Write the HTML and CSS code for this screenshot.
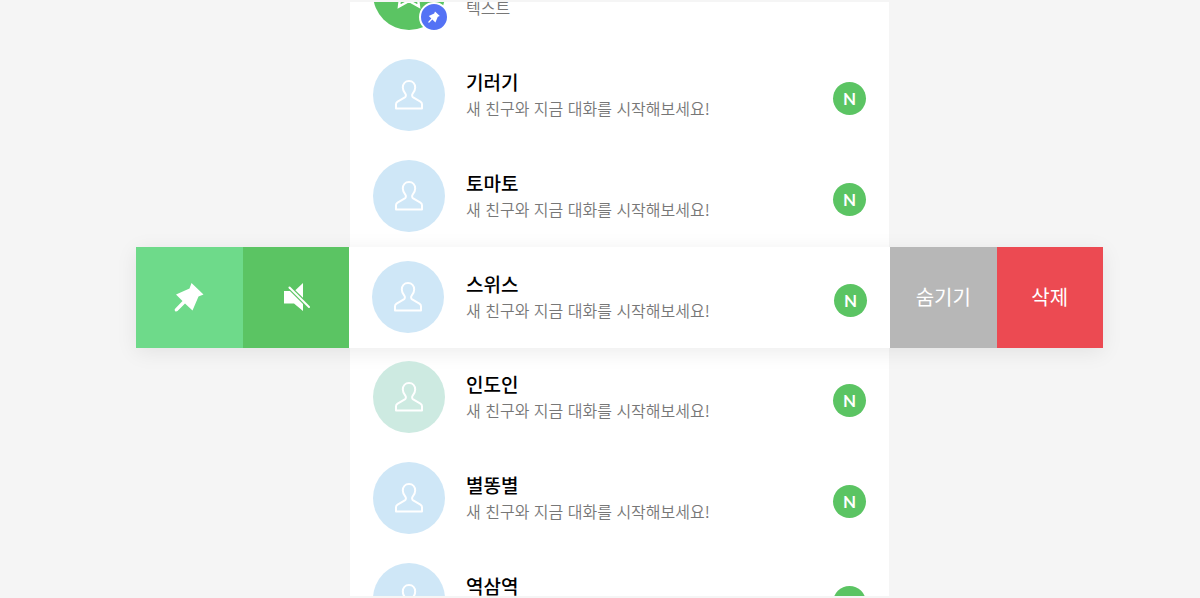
FILE: index.html
```
<!DOCTYPE html>
<html lang="ko">
<head>
<meta charset="utf-8">
<meta name="viewport" content="width=device-width, initial-scale=1">
<title>채팅</title>
<link rel="stylesheet" href="styles.css">
</head>
<body>

<!-- Shared icons -->
<svg class="sprite" aria-hidden="true">
  <symbol id="person" viewBox="0 0 28 30">
    <path d="M14 1C10.200 1 7.800 3.800 7.800 7.600C7.800 10 8.900 12 10.300 13.600C11.200 14.700 11.100 16.500 9.800 17.400L2.600 21.600C1.500 22.300 1 23 1 24.200V28.500H27V24.200C27 23 26.500 22.300 25.400 21.600L18.200 17.400C16.900 16.500 16.800 14.700 17.700 13.600C19.100 12 20.200 10 20.200 7.600C20.200 3.800 17.800 1 14 1Z" fill="none" stroke="#fff" stroke-width="2" stroke-linejoin="round"/>
  </symbol>
  <symbol id="pin" viewBox="0 0 30 30">
    <path d="M17.500 1L29.500 12.500L24.500 14.500L18.500 28.500L11 21.500L3.500 29Q2 30 1 28.900T1.300 26.500L8.500 19L2 12.500L15.500 6.500Z" fill="#fff"/>
  </symbol>
</svg>

<div class="page">
  <ul class="list">
    <li class="row">
      <div class="avatar star">
        <svg width="36" height="36" viewBox="0 0 36 36"><path d="M18 0L22.500 9.500L33 11L26.500 18.500L28 30.500L18 25L8 30.500L9.500 18.500L3 11L13.500 9.500Z" fill="none" stroke="#fff" stroke-width="2.400"/></svg>
        <span class="pinned"><svg width="12" height="12"><use href="#pin"/></svg></span>
      </div>
      <div class="text">
        <h2>텍스트</h2>
        <p>텍스트</p>
      </div>
    </li>
    <li class="row">
      <div class="avatar"><svg width="28" height="30"><use href="#person"/></svg></div>
      <div class="text">
        <h2>기러기</h2>
        <p>새 친구와 지금 대화를 시작해보세요!</p>
      </div>
      <span class="new">N</span>
    </li>
    <li class="row">
      <div class="avatar"><svg width="28" height="30"><use href="#person"/></svg></div>
      <div class="text">
        <h2>토마토</h2>
        <p>새 친구와 지금 대화를 시작해보세요!</p>
      </div>
      <span class="new">N</span>
    </li>
    <!-- Swiped row, with the actions of both sides open -->
    <li class="swipe">
      <div class="actions">
        <button class="pin" type="button" aria-label="고정"><svg width="30" height="30"><use href="#pin"/></svg></button>
        <button class="mute" type="button" aria-label="알림 끄기">
          <svg width="28" height="30" viewBox="0 0 28 30">
            <path d="M2 9H10.500L21 19.500V29L12 21.500H2Z" fill="#fff"/>
            <path d="M21 1V17.500L12.500 9Z" fill="#fff"/>
            <path d="M7.500 5.500L27 25" stroke="#5bc463" stroke-width="4.500"/>
            <path d="M7.500 5.500L27 25" stroke="#fff" stroke-width="2" stroke-linecap="round"/>
          </svg>
        </button>
      </div>
      <div class="row">
        <div class="avatar"><svg width="28" height="30"><use href="#person"/></svg></div>
        <div class="text">
          <h2>스위스</h2>
          <p>새 친구와 지금 대화를 시작해보세요!</p>
        </div>
        <span class="new">N</span>
      </div>
      <div class="actions">
        <button class="hide" type="button">숨기기</button>
        <button class="delete" type="button">삭제</button>
      </div>
    </li>
    <li class="row">
      <div class="avatar green"><svg width="28" height="30"><use href="#person"/></svg></div>
      <div class="text">
        <h2>인도인</h2>
        <p>새 친구와 지금 대화를 시작해보세요!</p>
      </div>
      <span class="new">N</span>
    </li>
    <li class="row">
      <div class="avatar"><svg width="28" height="30"><use href="#person"/></svg></div>
      <div class="text">
        <h2>별똥별</h2>
        <p>새 친구와 지금 대화를 시작해보세요!</p>
      </div>
      <span class="new">N</span>
    </li>
    <li class="row">
      <div class="avatar"><svg width="28" height="30"><use href="#person"/></svg></div>
      <div class="text">
        <h2>역삼역</h2>
        <p>새 친구와 지금 대화를 시작해보세요!</p>
      </div>
      <span class="new">N</span>
    </li>
  </ul>
</div>

</body>
</html>
```

FILE: styles.css
```
* {
  box-sizing: border-box;
}

body {
  margin: 0;
  padding: 2px 0;
  background: #f5f5f5;
  font-family: "Noto Sans CJK KR", "Noto Sans", sans-serif;
}

.sprite {
  display: block;
  width: 0;
  height: 0;
}

svg {
  display: block;
}

/* Visible part of the scrolled list */
.page {
  display: flex;
  justify-content: center;
  height: calc(100vh - 4px);
  padding-left: 39px;
  overflow: hidden;
}

/* Chat list */
.list {
  display: flex;
  flex: 1;
  flex-direction: column;
  max-width: 539px;
  margin: 0;
  padding: 0;
  list-style: none;
  background: white;
}

.row {
  display: flex;
  flex: none;
  align-items: center;
  gap: 21px;
  height: 101px;
  padding: 0 23px 2px;
}

/* The list is scrolled past its first row */
.list > .row:first-child {
  margin-top: -58px;
}

/* Avatar */
.avatar {
  position: relative;
  display: flex;
  flex: none;
  align-items: center;
  justify-content: center;
  width: 72px;
  height: 72px;
  border-radius: 50%;
  background: #cfe7f7;
}

.avatar.green {
  background: #cdeae1;
}

.avatar.star {
  background: #5bc463;
}

.pinned {
  position: absolute;
  right: -4px;
  bottom: -2px;
  display: flex;
  align-items: center;
  justify-content: center;
  width: 30px;
  height: 30px;
  border: 2px solid white;
  border-radius: 50%;
  background: #5472f5;
}

/* Name and message */
.text {
  flex: 1;
  min-width: 0;
  white-space: nowrap;
}

.text h2 {
  margin: 0;
  font-size: 19px;
  font-weight: 500;
  line-height: 26px;
  color: black;
}

.text p {
  margin: 0;
  font-size: 16px;
  font-weight: 350;
  line-height: 26px;
  color: #777;
}

.new {
  flex: none;
  width: 33px;
  height: 33px;
  margin-top: 7px;
  border-radius: 50%;
  background: #5bc463;
  color: white;
  font-family: Lato, sans-serif;
  font-size: 17px;
  font-weight: 700;
  line-height: 33px;
  text-align: center;
}

/* Swiped row */
.swipe {
  position: relative;
  display: flex;
  flex: none;
  margin: 0 -214px -1px;
  background: white;
  box-shadow: 0 4px 20px rgba(0, 0, 0, 0.08);
}

.swipe .row {
  flex: 1;
  gap: 22px;
  min-width: 0;
}

.actions {
  display: flex;
  width: 213px;
}

.actions button {
  display: flex;
  flex: 1;
  align-items: center;
  justify-content: center;
  padding: 0 0 2px;
  border: 0;
  color: white;
  font-family: inherit;
  font-size: 20px;
}

.actions .pin {
  background: #6eda8a;
}

.actions .mute {
  background: #5bc463;
}

.actions .hide {
  background: #b7b7b7;
}

.actions .delete {
  background: #ec4a52;
}
```
